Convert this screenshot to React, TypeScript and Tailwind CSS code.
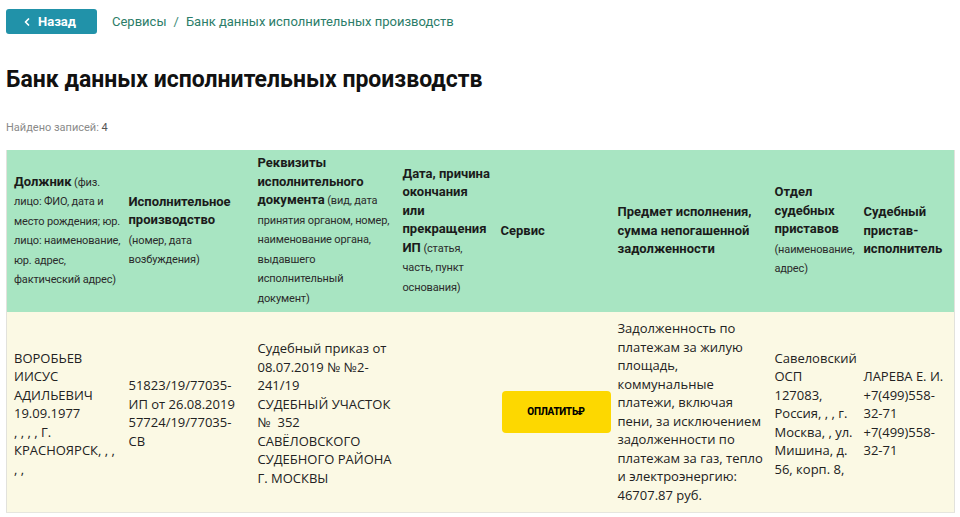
import { ChevronLeft } from "lucide-react";

/* ------------------------------------------------------------------ */
/*  Data                                                               */
/* ------------------------------------------------------------------ */

type Record = {
  debtor: string[];
  proceeding: string[];
  document: string[];
  ended: string;
  subject: string;
  department: string;
  bailiff: string;
};

const records: Record[] = [
  {
    debtor: ["ВОРОБЬЕВ ИИСУС АДИЛЬЕВИЧ", "19.09.1977", ", , , , Г. КРАСНОЯРСК, , , , ,"],
    proceeding: ["51823/19/77035-ИП от 26.08.2019", "57724/19/77035-СВ"],
    document: [
      "Судебный приказ от 08.07.2019 № №2-241/19",
      "СУДЕБНЫЙ УЧАСТОК № \u00a0352 САВЁЛОВСКОГО СУДЕБНОГО РАЙОНА Г. МОСКВЫ",
    ],
    ended: "",
    subject:
      "Задолженность по платежам за жилую площадь, коммунальные платежи, включая пени, за исключением задолженности по платежам за газ, тепло и электроэнергию: 46707.87 руб.",
    department: "Савеловский ОСП 127083, Россия, , , г. Москва, , ул. Мишина, д. 56, корп. 8,",
    bailiff: "ЛАРЕВА Е. И. +7(499)558-32-71 +7(499)558-32-71",
  },
];

const sans = "font-['Roboto','Liberation_Sans',sans-serif]";
const body = "font-['Open_Sans','Liberation_Sans',sans-serif]";

/* ------------------------------------------------------------------ */
/*  Header cell                                                        */
/* ------------------------------------------------------------------ */

function Th({
  title,
  note,
  width,
}: {
  title: string;
  note?: string;
  width: string;
}) {
  return (
    <th
      className={`${width} pl-[7px] pr-[1px] py-[4px] text-left align-middle font-normal text-[13px] leading-[18.5px] text-[#1b1b1b]`}
    >
      <span className="font-bold">{title}</span>
      {note && (
        <span className="text-[11px] tracking-[-0.15px] text-[#2b2b2b]"> {note}</span>
      )}
    </th>
  );
}

/* ------------------------------------------------------------------ */
/*  Page                                                               */
/* ------------------------------------------------------------------ */

export default function App() {
  return (
    <div className={`${sans} min-h-[517px] bg-white px-[6px] pt-[9px] text-[#1b1b1b]`}>
      {/* breadcrumbs */}
      <div className="flex items-center">
        <button className="flex h-[25px] w-[91px] items-center gap-[5px] rounded-[3px] bg-[#2192a9] pl-[15px] text-[13px] font-bold text-white">
          <ChevronLeft className="h-3 w-3" strokeWidth={3.5} />
          Назад
        </button>
        <nav className="ml-[15px] flex items-center text-[13px] text-[#2c7d69]">
          <span>Сервисы</span>
          <span className="mx-[7px] text-[#3a8a76]">/</span>
          <span>Банк данных исполнительных производств</span>
        </nav>
      </div>

      <h1 className="mt-[31px] text-[23px] font-bold leading-[30px] text-[#111]">
        Банк данных исполнительных производств
      </h1>

      <p className="mt-[26px] text-[11px] leading-[14px] text-[#8a8a8a]">
        Найдено записей: <span className="text-[#555]">4</span>
      </p>

      <table className="mt-[15px] w-[948px] table-fixed border-collapse border-x border-[#e2e2dc]">
        <thead>
          <tr className="h-[162px] bg-[#a8e5c2]">
            <Th
              width="w-[115px]"
              title="Должник"
              note="(физ. лицо: ФИО, дата и место рождения; юр. лицо: наименование, юр. адрес, фактический адрес)"
            />
            <Th width="w-[129px]" title="Исполнительное производство" note="(номер, дата возбуждения)" />
            <Th
              width="w-[145px]"
              title="Реквизиты исполнительного документа"
              note="(вид, дата принятия органом, номер, наименование органа, выдавшего исполнительный документ)"
            />
            <Th
              width="w-[98px]"
              title="Дата, причина окончания или прекращения ИП"
              note="(статья, часть, пункт основания)"
            />
            <Th width="w-[117px]" title="Сервис" />
            <Th width="w-[157px]" title="Предмет исполнения, сумма непогашенной задолженности" />
            <Th width="w-[89px]" title="Отдел судебных приставов" note="(наименование, адрес)" />
            <Th width="w-[98px]" title="Судебный пристав-исполнитель" />
          </tr>
        </thead>
        <tbody>
          {records.map((r, i) => (
            <tr
              key={i}
              className={`${body} h-[200px] border-b border-[#e6e6de] bg-[#fbf9e4] text-[13px] leading-[18.5px] text-[#222]`}
            >
              <td className="pl-[7px] pr-[1px] pt-[3px] align-middle">
                {r.debtor.map((l) => (
                  <div key={l}>{l}</div>
                ))}
              </td>
              <td className="pl-[7px] pr-[4px] pt-[3px] align-middle">
                {r.proceeding.map((l) => (
                  <div key={l}>{l}</div>
                ))}
              </td>
              <td className="pl-[7px] pr-[1px] pt-[3px] align-middle">
                {r.document.map((l) => (
                  <div key={l}>{l}</div>
                ))}
              </td>
              <td className="pl-[7px] pr-[1px] align-middle">{r.ended}</td>
              <td className="pl-[8px] align-middle">
                <button
                  className={`${sans} flex h-[42px] w-[109px] items-center justify-center rounded-[4px] bg-[#fdd800] text-[10px] font-extrabold tracking-[-0.3px] text-black`}
                >
                  ОПЛАТИТЬ₽
                </button>
              </td>
              <td className="pl-[7px] pr-[1px] align-middle">{r.subject}</td>
              <td className="pl-[7px] pr-[3px] pt-[3px] align-middle">{r.department}</td>
              <td className="pl-[7px] pr-[1px] pt-[3px] align-middle">{r.bailiff}</td>
            </tr>
          ))}
        </tbody>
      </table>
    </div>
  );
}
